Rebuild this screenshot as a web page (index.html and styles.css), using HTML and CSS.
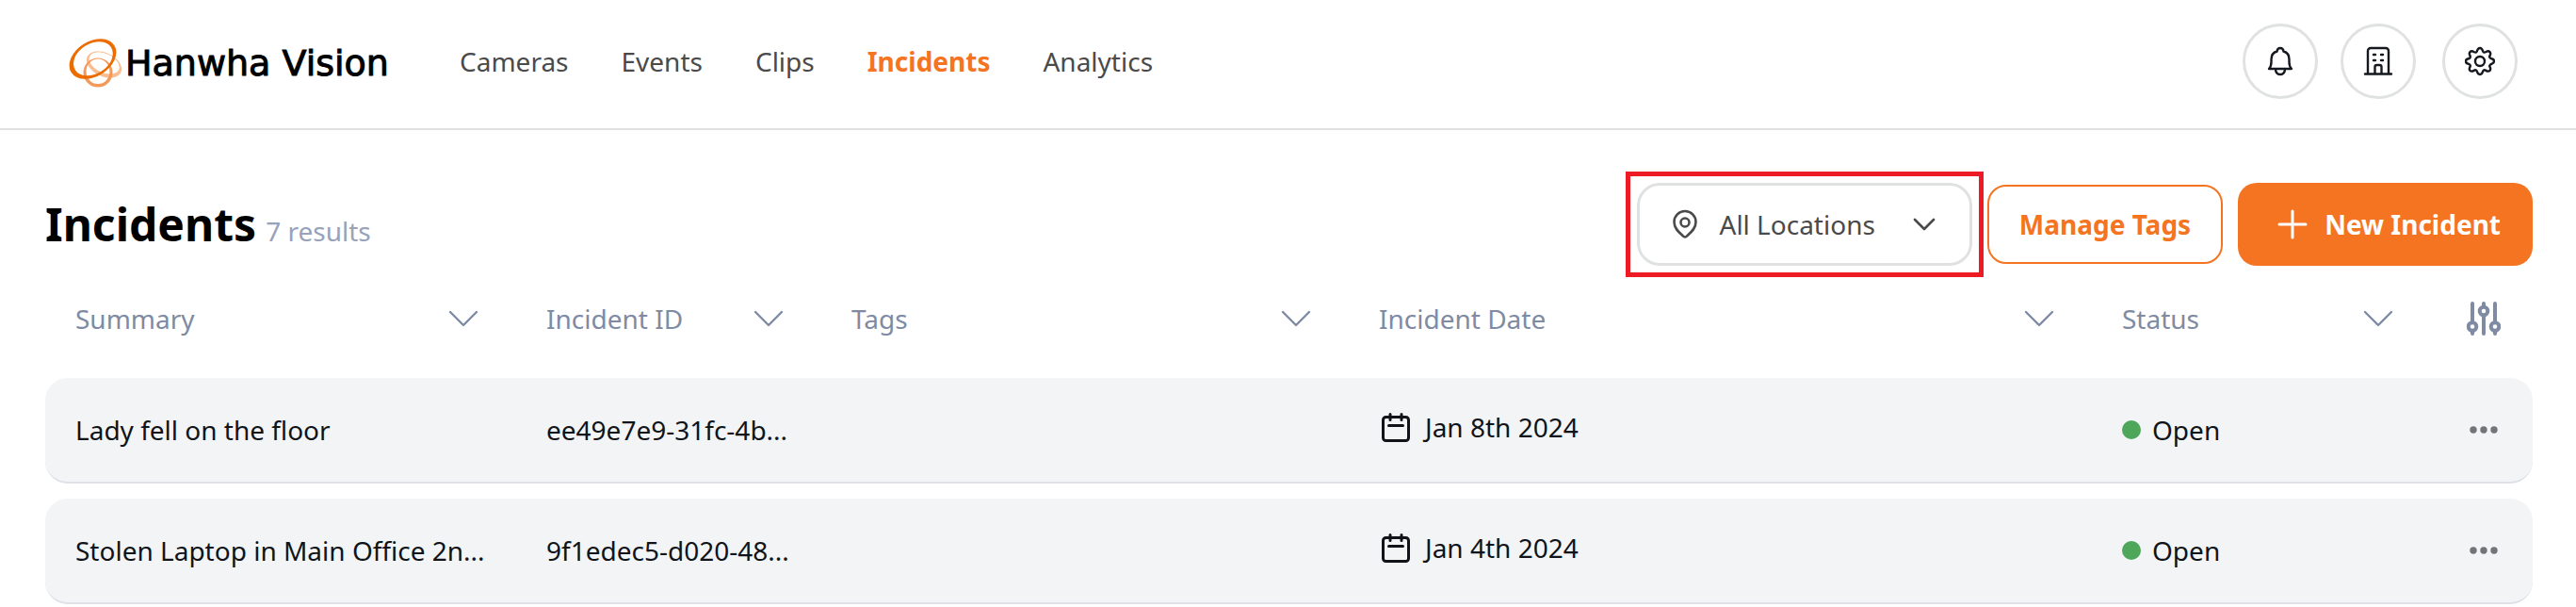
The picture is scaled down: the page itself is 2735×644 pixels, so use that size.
FILE: index.html
```
<!DOCTYPE html>
<html lang="en">
<head>
    <meta charset="UTF-8">
    <title>Incidents - Hanwha Vision</title>
    <link rel="stylesheet" href="styles.css">
</head>
<body>
    <!-- shared icons -->
    <svg class="sprite" aria-hidden="true">
        <symbol id="chevron" viewBox="0 0 32 18">
            <path d="M2 2l14 14L30 2" fill="none" stroke="currentColor" stroke-width="2.4" stroke-linecap="round" stroke-linejoin="round"/>
        </symbol>
        <symbol id="calendar" viewBox="0 0 32 32">
            <g fill="none" stroke="currentColor" stroke-width="3" stroke-linecap="round">
                <rect x="2.5" y="5.5" width="27" height="25" rx="3"/>
                <path d="M10 2.5v6M22 2.5v6M8.500 14.500h15"/>
            </g>
        </symbol>
        <symbol id="dots" viewBox="0 0 32 8">
            <circle cx="5" cy="4" r="3.700"/>
            <circle cx="16" cy="4" r="3.700"/>
            <circle cx="27" cy="4" r="3.700"/>
        </symbol>
    </svg>

    <header class="topbar">
        <a href="#" class="logo">
            <svg class="logo-mark" viewBox="0 0 58 52" fill-rule="evenodd" aria-hidden="true">
                <g transform="rotate(25 37.500 27.500)">
                    <path fill="#f9bd92" d="M17.800 27.500a19.700 12.500 0 1 0 39.400 0a19.700 12.500 0 1 0 -39.400 0zM20 26a17 10 0 1 0 34 0a17 10 0 1 0 -34 0z"/>
                </g>
                <path fill="#f39a5b" d="M15.500 36a15.500 15.500 0 1 0 31 0a15.500 15.500 0 1 0 -31 0zM18.500 34.800a12.500 13.200 0 1 0 25 0a12.500 13.200 0 1 0 -25 0z"/>
                <g transform="rotate(-32 25.500 21.500)">
                    <path fill="#ec6c00" d="M-1.500 21.500a27 18.500 0 1 0 54 0a27 18.500 0 1 0 -54 0zM3.500 21.500a22.500 16 0 1 0 45 0a22.500 16 0 1 0 -45 0z"/>
                </g>
            </svg>
            <span>Hanwha Vision</span>
        </a>
        <nav class="menu">
            <a href="#">Cameras</a>
            <a href="#">Events</a>
            <a href="#">Clips</a>
            <a href="#" class="active">Incidents</a>
            <a href="#">Analytics</a>
        </nav>
        <div class="tools">
            <button type="button" class="round" aria-label="Notifications">
                <svg viewBox="0 0 32 32">
                    <path d="M4 24c2-2 2.500-4 2.500-7v-3c0-5 2.500-7.500 6-8.500C12.800 3 14 2 16 2s3.200 1 3.500 3.500c3.500 1 6 3.500 6 8.500v3c0 3 .5 5 2.500 7zM11 24c0 4 2 6 5 6s5-2 5-6"/>
                </svg>
            </button>
            <button type="button" class="round" aria-label="Organization">
                <svg viewBox="0 0 32 32">
                    <path d="M5 29.500V5a3 3 0 0 1 3-3h16a3 3 0 0 1 3 3v24.500M2 29.500h28M12.500 29.500V22a2 2 0 0 1 2-2h3a2 2 0 0 1 2 2v7.500M11 9h2M19 9h2M11 15h2M19 15h2"/>
                </svg>
            </button>
            <button type="button" class="round" aria-label="Settings">
                <svg viewBox="0 0 32 32">
                    <path d="M13 5c.6-2 1.500-3 3-3s2.400 1 3 3 1.700 2 3.500 1 3-.9 4 .1 1 2.200 0 4 .5 2.900 2.500 3.400S31 14.500 31 16s-1 2-2 2.500-3.500 1.500-2.500 3.400 1 3 0 4-2.200 1-4 0-2.900-.9-3.500 1.100-1.500 3-3 3-2.400-1-3-3-1.700-2.100-3.500-1.100-3 1-4 0-1-2.200 0-4S5 19 3 18.500 1 17.500 1 16s0-2 2-2.500 3.500-1.500 2.500-3.400-1-3 0-4 2.200-1.100 4-.1S12.400 7 13 5z"/>
                    <circle cx="16" cy="16" r="5"/>
                </svg>
            </button>
        </div>
    </header>

    <main>
        <div class="page-head">
            <h1>Incidents</h1>
            <span class="count">7 results</span>
            <div class="actions">
                <div class="highlight">
                    <button type="button" class="btn locations">
                        <svg class="pin" viewBox="0 0 28 32">
                            <path d="M14 29.500c-1.500 0-2-1-3-2C7 24 2.500 20 2.500 13.500a11.500 11.500 0 0 1 23 0C25.500 20 21 24 17 27.500c-1 1-1.500 2-3 2z"/>
                            <circle cx="14" cy="14" r="4.500"/>
                        </svg>
                        <span>All Locations</span>
                        <svg class="arrow" viewBox="0 0 24 14"><path d="M2 2l10 10L22 2"/></svg>
                    </button>
                </div>
                <button type="button" class="btn tags">Manage Tags</button>
                <button type="button" class="btn new">
                    <svg class="plus" viewBox="0 0 32 32"><path d="M16 2v28M2 16h28"/></svg>
                    <span>New Incident</span>
                </button>
            </div>
        </div>

        <table class="incidents">
            <colgroup>
                <col class="col-summary">
                <col class="col-id">
                <col class="col-tags">
                <col>
                <col class="col-status">
                <col class="col-menu">
            </colgroup>
            <thead>
                <tr>
                    <th><div class="sort">Summary <svg><use href="#chevron"/></svg></div></th>
                    <th><div class="sort">Incident ID <svg><use href="#chevron"/></svg></div></th>
                    <th><div class="sort">Tags <svg><use href="#chevron"/></svg></div></th>
                    <th><div class="sort">Incident Date <svg><use href="#chevron"/></svg></div></th>
                    <th><div class="sort">Status <svg><use href="#chevron"/></svg></div></th>
                    <th>
                        <button type="button" class="icon-btn" aria-label="Columns">
                            <svg class="sliders" viewBox="0 0 36 36">
                                <path d="M6 2v20M6 31v3M18 2v3M18 15v19M30 2v20M30 31v3"/>
                                <circle cx="6" cy="26.500" r="4.300"/>
                                <circle cx="18" cy="10" r="4.300"/>
                                <circle cx="30" cy="26.500" r="4.300"/>
                            </svg>
                        </button>
                    </th>
                </tr>
            </thead>
            <tbody>
                <tr>
                    <td>Lady fell on the floor</td>
                    <td>ee49e7e9-31fc-4b...</td>
                    <td></td>
                    <td><div class="date"><svg><use href="#calendar"/></svg>Jan 8th 2024</div></td>
                    <td><div class="status">Open</div></td>
                    <td><button type="button" class="icon-btn" aria-label="More"><svg class="dots"><use href="#dots"/></svg></button></td>
                </tr>
                <tr>
                    <td>Stolen Laptop in Main Office 2n...</td>
                    <td>9f1edec5-d020-48...</td>
                    <td></td>
                    <td><div class="date"><svg><use href="#calendar"/></svg>Jan 4th 2024</div></td>
                    <td><div class="status">Open</div></td>
                    <td><button type="button" class="icon-btn" aria-label="More"><svg class="dots"><use href="#dots"/></svg></button></td>
                </tr>
            </tbody>
        </table>
    </main>
</body>
</html>
```
FILE: styles.css
```
* {
    box-sizing: border-box;
}
body {
    margin: 0;
    background-color: #fff;
    color: #101418;
    font-family: "Noto Sans", sans-serif;
    font-size: 28px;
    line-height: 40px;
}
a {
    text-decoration: none;
    color: inherit;
}
button {
    font: inherit;
    cursor: pointer;
}
svg {
    display: block;
    flex: none;
}
.sprite {
    display: none;
}

/* top bar */
.topbar {
    display: flex;
    align-items: center;
    padding: 25px 62px 31px 73px;
    border-bottom: 2px solid #e0e0e0;
}
.logo {
    display: flex;
    align-items: center;
    gap: 2px;
    width: 415px;
    padding-top: 4px;
    color: #000;
    font-family: "DejaVu Sans", sans-serif;
    font-size: 38px;
    white-space: nowrap;
    -webkit-text-stroke: 1px #000;
}
.logo-mark {
    width: 58px;
    height: 52px;
}
.menu {
    display: flex;
    gap: 56px;
    color: #4a4a4a;
}
.menu .active {
    color: #f57421;
    font-weight: bold;
}
.tools {
    display: flex;
    gap: 24px;
    margin-left: auto;
}
.round {
    display: flex;
    align-items: center;
    justify-content: center;
    width: 80px;
    height: 80px;
    padding: 0;
    border: 3px solid #e0e2e2;
    border-radius: 50%;
    background: #fff;
    color: #15181e;
}
.round:last-child {
    margin-left: 4px;
}
.round svg {
    width: 32px;
    height: 32px;
    fill: none;
    stroke: currentColor;
    stroke-width: 2.4;
    stroke-linecap: round;
    stroke-linejoin: round;
}

/* page title and buttons */
main {
    padding: 56px 46px 0 48px;
}
.page-head {
    display: flex;
    align-items: baseline;
}
h1 {
    margin: 0 10px 0 0;
    color: #000;
    font-size: 48px;
    line-height: 88px;
}
.count {
    color: #98a2b8;
}
.actions {
    display: flex;
    align-items: center;
    align-self: center;
    gap: 16px;
    margin-left: auto;
}
.highlight {
    position: relative;
}
.highlight::after {
    content: "";
    position: absolute;
    inset: -12px;
    border: 5px solid #ed1c24;
    pointer-events: none;
}
.btn {
    display: flex;
    align-items: center;
    height: 88px;
    border-radius: 20px;
    white-space: nowrap;
}
.btn svg {
    fill: none;
    stroke: currentColor;
    stroke-linecap: round;
    stroke-linejoin: round;
}
.locations {
    padding: 0 36px 0 34px;
    border: 3px solid #e0e2e2;
    border-radius: 24px;
    background: #fff;
    color: #4a4a4a;
}
.pin {
    width: 28px;
    height: 32px;
    margin-right: 22px;
    stroke-width: 2.6;
}
.arrow {
    width: 24px;
    height: 14px;
    margin-left: 40px;
    stroke-width: 2.6;
}
.tags {
    height: 84px;
    padding: 0 32px;
    border: 2px solid #f57421;
    background: #fff;
    color: #f57421;
    font-weight: bold;
}
.new {
    gap: 18px;
    padding: 0 34px 0 42px;
    border: 0;
    background: #f57421;
    color: #fff;
    font-weight: bold;
}
.plus {
    width: 32px;
    height: 32px;
    stroke-width: 3;
}

/* incidents table */
.incidents {
    width: 100%;
    table-layout: fixed;
    border-collapse: separate;
    border-spacing: 0 16px;
}
.col-summary { width: 500px; }
.col-id { width: 324px; }
.col-tags { width: 560px; }
.col-status { width: 360px; }
.col-menu { width: 108px; }
th {
    padding: 20px 32px 27px;
    color: #7e8ba3;
    font-weight: normal;
    text-align: left;
}
.sort {
    display: flex;
    align-items: center;
    justify-content: space-between;
}
.sort svg {
    width: 32px;
    height: 18px;
    margin-right: 8px;
}
td {
    height: 112px;
    padding: 0 32px;
    border-bottom: 2px solid #dfe1e8;
    background-color: #f3f4f6;
    white-space: nowrap;
}
td:first-child {
    border-radius: 24px 0 0 24px;
}
td:last-child {
    border-radius: 0 24px 24px 0;
}
th:last-child,
td:last-child {
    padding-right: 0;
}
.date {
    display: flex;
    align-items: center;
    gap: 15px;
    padding: 0 0 6px 2px;
}
.date svg {
    width: 32px;
    height: 32px;
}
.status {
    display: flex;
    align-items: center;
    gap: 12px;
}
.status::before {
    content: "";
    width: 20px;
    height: 20px;
    border-radius: 50%;
    background-color: #4ea65b;
}
.icon-btn {
    display: block;
    padding: 0;
    border: 0;
    margin-left: 6px;
    background: none;
    color: inherit;
}
.sliders {
    width: 36px;
    height: 36px;
    fill: none;
    stroke: currentColor;
    stroke-width: 4;
    stroke-linecap: round;
}
.dots {
    width: 36px;
    height: 8px;
    fill: #737478;
}
```
